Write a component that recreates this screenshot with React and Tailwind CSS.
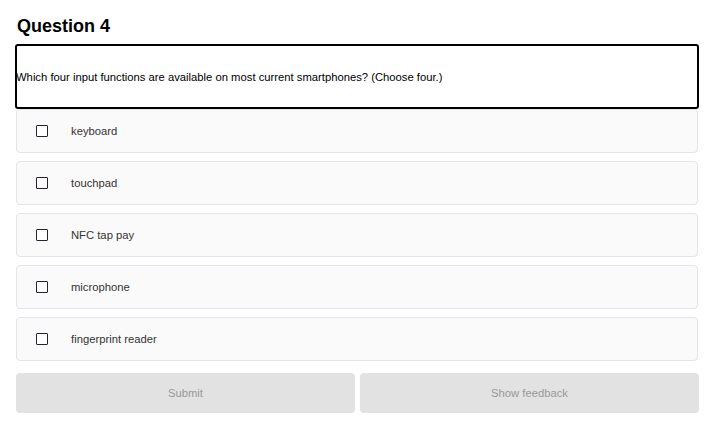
const options = ['keyboard', 'touchpad', 'NFC tap pay', 'microphone', 'fingerprint reader']

export default function App() {
  return (
    <div className="w-[720px] h-[438px] bg-white pt-[15px] pl-[16px] font-['Liberation_Sans',Arial,sans-serif]">
      <div className="w-[683px]">
        <h2 className="text-[18px] leading-[22px] font-bold text-black mb-[7px] ml-[1px]">Question 4</h2>
        <div className="ml-[-1px] h-[65px] border-2 border-black rounded-[3px] flex items-center">
          <p className="ml-[-1px] text-[11.25px] leading-[14px] text-black">
            Which four input functions are available on most current smartphones? (Choose four.)
          </p>
        </div>
        <div className="flex flex-col gap-[8px] pr-[1px]">
          {options.map((o) => (
            <label
              key={o}
              className="h-[44px] flex items-center bg-[#fafafa] border border-[#e3e5ea] rounded-[4px] cursor-pointer"
            >
              <span className="ml-[19px] w-[12px] h-[12px] border-[1.5px] border-[#2a2233] rounded-[1px] bg-white" />
              <span className="ml-[23px] text-[11.25px] text-[#333]">{o}</span>
            </label>
          ))}
        </div>
        <div className="mt-[12px] flex gap-[5px]">
          <button className="flex-1 h-[40px] rounded-[4px] bg-[#e2e2e2] text-[11.25px] text-[#999]">Submit</button>
          <button className="flex-1 h-[40px] rounded-[4px] bg-[#e2e2e2] text-[11.25px] text-[#999]">Show feedback</button>
        </div>
      </div>
    </div>
  )
}
